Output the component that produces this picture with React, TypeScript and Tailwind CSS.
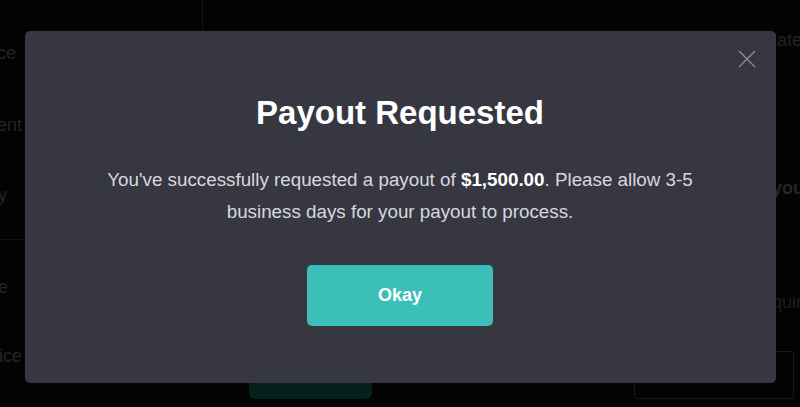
import React from "react";

function CloseIcon() {
  return (
    <svg width="18" height="18" viewBox="0 0 18 18" fill="none" stroke="currentColor" strokeWidth="1.4">
      <path d="M1 1 L17 17 M17 1 L1 17" />
    </svg>
  );
}

function PayoutModal({ amount, onClose }: { amount: string; onClose?: () => void }) {
  return (
    <div className="absolute inset-0 flex justify-center pt-[31px]">
      <div className="relative flex h-[352px] w-[751px] flex-col items-center rounded-[5px] bg-[#373742] pt-[62px]">
        <button onClick={onClose} className="absolute right-[20px] top-[19px] text-[#8b8b96]">
          <CloseIcon />
        </button>
        <h2 className="text-[33px] font-bold leading-[40px] text-white">Payout Requested</h2>
        <p className="mt-[31px] w-[600px] text-center text-[18.8px] leading-[32px] text-[#d8d8de]">
          You've successfully requested a payout of <span className="font-bold text-white">{amount}</span>. Please allow 3-5
          business days for your payout to process.
        </p>
        <button className="mt-[37px] h-[61px] w-[186px] rounded-[5px] bg-[#3cbfb8] text-[18px] font-bold text-white">
          Okay
        </button>
      </div>
    </div>
  );
}

export default function App() {
  return (
    <div className="relative h-[407px] w-full overflow-hidden bg-[#030304] font-['Liberation_Sans',Arial,sans-serif]">
      {/* dimmed page behind the modal */}
      <div className="flex h-full">
        <aside className="w-[202px] shrink-0 text-[18px] leading-[26px] text-[#232328]">
          <div className="-ml-[49px] flex flex-col pt-[40px]">
            <div className="h-[72px]">Balance</div>
            <div className="h-[70px]">Payment</div>
            <div className="h-[58px] border-b border-[#111115]">History</div>
            <div className="mt-[34px] h-[69px]">Invoice</div>
            <div className="ml-[6px] h-[26px]">Practice</div>
          </div>
        </aside>
        <main className="flex flex-1 flex-col items-end overflow-hidden">
          <div className="flex h-[60px] w-full justify-end border-l border-[#141418]">
            <div className="-mr-[12px] mt-[28px] whitespace-nowrap text-[18px] leading-[24px] text-[#222227]">
              Earnings are calculated
            </div>
          </div>
          <div className="-mr-[10px] mt-[116px] whitespace-nowrap text-[18px] font-bold leading-[24px] text-[#26262b]">
            Payout
          </div>
          <div className="-mr-[22px] mt-[90px] whitespace-nowrap text-[18px] leading-[24px] text-[#1d1d22]">
            Required
          </div>
          <div className="mt-[37px] flex w-full items-end justify-between pl-[47px] pr-[6px]">
            <div className="h-[48px] w-[123px] rounded-[6px] bg-[#05201d]" />
            <div className="h-[48px] w-[160px] rounded-[3px] border border-[#18181d]" />
          </div>
        </main>
      </div>

      <PayoutModal amount="$1,500.00" />
    </div>
  );
}
